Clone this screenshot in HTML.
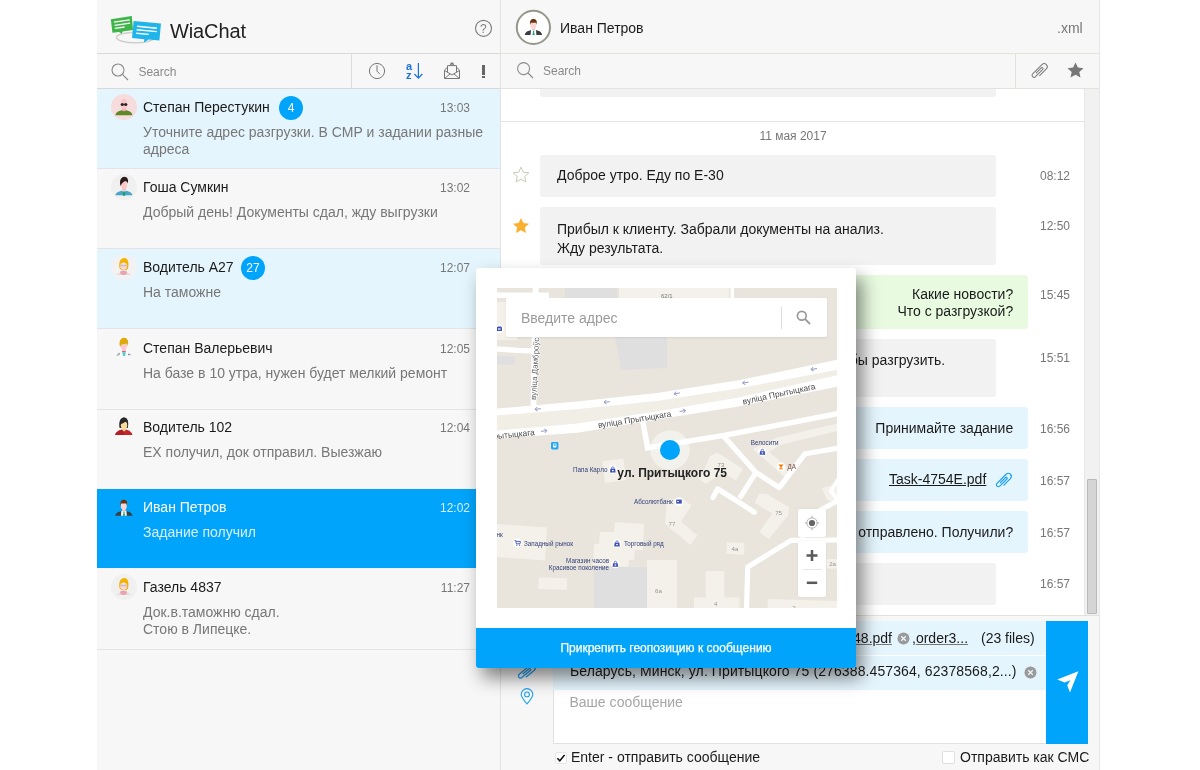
<!DOCTYPE html>
<html lang="ru">
<head>
<meta charset="utf-8">
<title>WiaChat</title>
<style>
*{box-sizing:border-box;margin:0;padding:0}
html,body{width:1200px;height:770px;overflow:hidden;background:#fff}
body{font-family:"Liberation Sans",sans-serif;font-size:14px;color:#222;position:relative;will-change:transform}
.abs{position:absolute}
#app{position:absolute;left:97px;top:0;width:1003px;height:770px;background:#f7f7f7;overflow:hidden}
/* all children of #app are positioned in page coords via #in */
#in{position:absolute;left:-97px;top:0;width:1200px;height:770px}
.hl{position:absolute;height:1px;background:#dcdcdc}
.vl{position:absolute;width:1px;background:#dcdcdc}
.t{position:absolute;white-space:nowrap;line-height:16px}
.g{color:#777}
.row{position:absolute;left:97px;width:403px}
.row .nm{position:absolute;left:46px;top:10px;font-size:14px;line-height:16px;color:#1a1a1a;white-space:nowrap}
.row .tm{position:absolute;right:30px;top:12.4px;font-size:12px;line-height:14px;color:#777;white-space:nowrap}
.row .ms{position:absolute;left:46px;top:35px;font-size:14px;line-height:17px;color:#777;white-space:nowrap}
.row .av{position:absolute;left:14px;top:5px;width:26px;height:26px}
.badge{position:absolute;top:6.8px;width:24px;height:24px;border-radius:12px;background:#00a4fa;color:#fff;font-size:12px;line-height:24px;text-align:center}
.bub{position:absolute;border-radius:3px}
.gr{background:#f2f2f2}
.bl{background:#e5f5fe}
.gn{background:#e8fbe0}
.mt{position:absolute;font-size:14px;line-height:17px;color:#1a1a1a;white-space:nowrap}
.tt{position:absolute;left:1040px;font-size:12px;line-height:14px;color:#777;white-space:nowrap}
</style>
</head>
<body>
<div id="app"><div id="in">

<!-- ============ LEFT PANEL ============ -->
<div class="hl" style="left:97px;top:53px;width:403px;background:#d9d9d9"></div>
<div class="hl" style="left:97px;top:88px;width:403px;background:#d9d9d9"></div>
<div class="vl" style="left:500px;top:0;height:770px;background:#e2e2e2"></div>
<div class="vl" style="left:351px;top:54px;height:34px;background:#dcdcdc"></div>

<!-- logo -->
<svg class="abs" style="left:108px;top:12px" width="58" height="34" viewBox="108 12 58 34">
  <ellipse cx="135.5" cy="37.5" rx="19" ry="5.3" fill="none" stroke="#cfcfcf" stroke-width="1.6"/>
  <path d="M110.8 19.2 L131.8 16 L133 30 L122.5 31.4 L121.8 33.8 L119 31.9 L112.4 32.8 Z" fill="#3fb54a"/>
  <path d="M114 22.2 L129.8 19.8 M114.6 25.4 L130 23.1 M114.8 28.4 L124.6 27" stroke="#fff" stroke-width="1.3" fill="none"/>
  <path d="M133.6 21 L161 23.6 L159.4 40.4 L148.6 39.6 L144 42.4 L144.2 39.2 L132 38 Z" fill="#1fb5ea"/>
  <path d="M137 26.2 L157 28.2 M136.6 29.8 L156.8 31.6 M136.2 33.2 L148.8 34.4" stroke="#fff" stroke-width="1.4" fill="none"/>
</svg>
<div class="t" style="left:170px;top:19px;font-size:20px;line-height:24px;color:#222;letter-spacing:-0.12px">WiaChat</div>

<!-- help -->
<svg class="abs" style="left:474px;top:19px" width="19" height="19" viewBox="0 0 19 19">
  <circle cx="9.5" cy="9.3" r="8" fill="none" stroke="#808080" stroke-width="1.15"/>
  <text x="9.4" y="13.6" font-family="Liberation Sans" font-size="12" fill="#808080" text-anchor="middle">?</text>
</svg>

<!-- left search -->
<svg class="abs" style="left:110.4px;top:61.8px" width="20" height="20" viewBox="0 0 20 20">
  <circle cx="8" cy="8" r="6" fill="none" stroke="#8a8a8a" stroke-width="1.1"/>
  <path d="M12.4 12.4 L18 18" stroke="#8a8a8a" stroke-width="1.1"/>
</svg>
<div class="t" style="left:138.4px;top:63.8px;font-size:12px;color:#8a8a8a">Search</div>

<!-- toolbar icons -->
<svg class="abs" style="left:368px;top:62px" width="18" height="18" viewBox="0 0 18 18">
  <circle cx="9" cy="9" r="7.6" fill="none" stroke="#777" stroke-width="1"/>
  <path d="M9 3.2 V9.2 L12 12.2" fill="none" stroke="#777" stroke-width="1"/>
</svg>
<svg class="abs" style="left:404px;top:61px" width="20" height="20" viewBox="404 61 20 20">
  <text x="406" y="69.6" font-family="Liberation Sans" font-weight="bold" font-size="11" fill="#1a73d8">a</text>
  <text x="406" y="78.6" font-family="Liberation Sans" font-weight="bold" font-size="11" fill="#1a73d8">z</text>
  <path d="M418.4 63 V78 M414.4 74 L418.4 78.2 L422.4 74" fill="none" stroke="#1a73d8" stroke-width="1.2"/>
</svg>
<svg class="abs" style="left:443px;top:61px" width="18" height="20" viewBox="443 61 18 20">
  <path d="M444.5 70 L444.5 78.5 L459.5 78.5 L459.5 70 L452 63.3 Z" fill="none" stroke="#777" stroke-width="1"/>
  <path d="M447.5 72.6 V65.6 H456.5 V72.6" fill="#f7f7f7" stroke="#777" stroke-width="1"/>
  <path d="M444.5 70.4 L452 75 L459.5 70.4 M444.8 78.3 L450.2 73.8 M459.2 78.3 L453.8 73.8" fill="none" stroke="#777" stroke-width="1"/>
  <rect x="450.5" y="62.6" width="3" height="2" fill="#777"/>
</svg>
<div class="abs" style="left:482px;top:65px;width:3px;height:9.5px;background:#666"></div>
<div class="abs" style="left:482px;top:76px;width:3px;height:2.4px;background:#666"></div>

<!-- row backgrounds & borders -->
<div class="abs" style="left:97px;top:89px;width:403px;height:79px;background:#e5f5fe"></div>
<div class="abs" style="left:97px;top:249px;width:403px;height:79px;background:#e5f5fe"></div>
<div class="abs" style="left:97px;top:489px;width:403px;height:79px;background:#00a4fa"></div>
<div class="hl" style="left:97px;top:568px;width:403px;background:#fbeee6"></div>
<div class="hl" style="left:97px;top:488px;width:403px;background:#fbeee2"></div>
<div class="hl" style="left:97px;top:168px;width:403px;background:#e4e4e4"></div>
<div class="hl" style="left:97px;top:248px;width:403px;background:#e4e4e4"></div>
<div class="hl" style="left:97px;top:328px;width:403px;background:#e4e4e4"></div>
<div class="hl" style="left:97px;top:409px;width:403px;background:#e4e4e4"></div>
<div class="hl" style="left:97px;top:649px;width:403px;background:#e4e4e4"></div>

<!-- row 1 -->
<div class="row" style="top:89px;height:79px">
  <svg class="av" viewBox="0 0 26 26"><circle cx="13" cy="13" r="13" fill="#f6dcdd"/>
    <path d="M4.4 21.2 C4.6 18.2 7.8 16.9 10.8 16.2 L15.2 16.2 C18.2 16.9 21.2 18.2 21.4 21.2 Z" fill="#5b8a26"/>
    <path d="M11 13 H15 V16.6 Q13 17.8 11 16.6 Z" fill="#efaeba"/>
    <path d="M9.9 8.6 C9.9 6 11.6 4.8 13 4.8 C14.4 4.8 16.1 6 16.1 8.6 V12 Q15.6 15 13 15.2 Q10.4 15 9.9 12 Z" fill="#fdc6c6"/>
    <circle cx="11.3" cy="10.5" r="1.55" fill="#262626"/><circle cx="14.7" cy="10.5" r="1.55" fill="#262626"/><rect x="9.7" y="9.9" width="6.6" height="0.9" fill="#262626"/>
  </svg>
  <div class="nm">Степан Перестукин</div>
  <div class="badge" style="left:182px">4</div>
  <div class="tm">13:03</div>
  <div class="ms">Уточните адрес разгрузки. В CMP и задании разные<br>адреса</div>
</div>
<!-- row 2 -->
<div class="row" style="top:169px;height:79px">
  <svg class="av" viewBox="0 0 26 26"><circle cx="13" cy="13" r="13" fill="#f0f0f0"/>
    <path d="M4.4 21.3 C4.6 18.6 7.8 17.4 10.8 16.7 L15.2 16.7 C18.2 17.4 21.2 18.6 21.4 21.3 Z" fill="#4ba5c7"/>
    <path d="M10.6 16.4 L13 18.2 L15.4 16.4 L14.8 15.4 H11.2 Z" fill="#eef4f6"/>
    <path d="M12 17.4 H14 L14.3 21.8 H11.7 Z" fill="#18a374"/>
    <rect x="11.3" y="13" width="3.4" height="3.6" fill="#f7b3bb"/>
    <path d="M9.9 8 H16.1 V12 Q15.6 15 13 15.2 Q10.4 15 9.9 12 Z" fill="#fdc9ca"/>
    <path d="M9.4 11.4 C8 5.6 10.8 2.8 13.3 2.8 C16.4 2.8 17.8 5.6 16.8 9.6 C16.2 7.4 14.8 6.8 13.4 7.6 C11.6 8.6 10.6 9.6 9.9 11.8 Z" fill="#2d1b1b"/>
  </svg>
  <div class="nm">Гоша Сумкин</div>
  <div class="tm">13:02</div>
  <div class="ms">Добрый день! Документы сдал, жду выгрузки</div>
</div>
<!-- row 3 -->
<div class="row" style="top:249px;height:79px">
  <svg class="av" viewBox="0 0 26 26"><circle cx="13" cy="13" r="13" fill="#f2f2f2"/>
    <path d="M5 20.9 L10 18 H16 L20.2 20.9 Z" fill="#e8dada"/>
    <path d="M8.6 14.6 C7 8 9.8 4 13.4 4 C17 4.2 18.2 8.4 17 14.4 L15.4 16 L10.4 16 Z" fill="#f0b400"/>
    <ellipse cx="12.6" cy="12.2" rx="3.3" ry="3.6" fill="#fad9e0"/>
    <path d="M9.2 17.4 Q12.6 15.4 15.8 17.4 Q16.4 20.9 12.6 20.9 Q8.8 20.9 9.2 17.4 Z" fill="#e8a3b0"/>
    <path d="M9.6 11.6 H15.6" stroke="#b7afcb" stroke-width="0.8"/><circle cx="11" cy="11.8" r="1.2" fill="none" stroke="#c5bfd6" stroke-width="0.5"/><circle cx="14.2" cy="11.8" r="1.2" fill="none" stroke="#c5bfd6" stroke-width="0.5"/>
  </svg>
  <div class="nm">Водитель А27</div>
  <div class="badge" style="left:144px">27</div>
  <div class="tm">12:07</div>
  <div class="ms">На таможне</div>
</div>
<!-- row 4 -->
<div class="row" style="top:330px;height:79px">
  <svg class="av" viewBox="0 0 26 26">
    <path d="M4.2 21.3 C4.4 18.4 7.8 17.2 10.8 16.5 L15.2 16.5 C18.2 17.2 21.4 18.4 21.6 21.3 Z" fill="#fbfbfb"/>
    <path d="M5 20.8 L7.4 18 L9.4 17.4 L8.8 19.4 L7.4 20.8 Z" fill="#a9b3b8"/>
    <path d="M17.6 17.6 L18.6 20.6 M19.4 18.4 L20.2 21" stroke="#b9c3c8" stroke-width="0.6"/>
    <rect x="17.3" y="19" width="1.3" height="1.1" fill="#4a4f9a"/>
    <path d="M11.2 17.2 H14.6 L14.2 21 H12 Z" fill="#4fcfd3"/>
    <rect x="11.3" y="12.6" width="3.4" height="4" fill="#fcc5cc"/>
    <rect x="11" y="15.9" width="3.8" height="1.3" fill="#c8717c"/>
    <path d="M9.4 8 H15.9 V11.6 Q15.4 14.6 12.7 14.8 Q10 14.6 9.4 11.6 Z" fill="#fdc9d0"/>
    <path d="M9 11.8 C7.4 6 10.2 2.8 13 2.8 C16.4 2.8 18 5.8 16.8 11.4 C16.6 9.6 16 8.4 15 8.6 C13.4 9.4 11.2 9 10.2 10 Z" fill="#ddaa08"/>
  </svg>
  <div class="nm" style="top:10px">Степан Валерьевич</div>
  <div class="tm">12:05</div>
  <div class="ms" style="top:35px">На базе в 10 утра, нужен будет мелкий ремонт</div>
</div>
<!-- row 5 -->
<div class="row" style="top:409px;height:79px">
  <svg class="av" viewBox="0 0 26 26">
    <path d="M8.6 14 C7.2 7.4 9.8 3.4 12.8 3.4 C16.4 3.4 18 7 16.8 14 Z" fill="#2a2729"/>
    <path d="M4.2 21.1 C4.6 18 8 16.6 11 15.6 L13 17.4 L15 15.6 C18 16.6 21.2 18 21.4 21.1 Z" fill="#c3262a"/>
    <path d="M4.2 21.1 C4.6 18 8 16.6 11 15.6 L13 17.4 V21.1 Z" fill="#b01f24"/>
    <path d="M11 13.4 H15 V15.8 L13 17.6 L11 15.8 Z" fill="#efd089"/>
    <ellipse cx="13" cy="11.2" rx="3.2" ry="4" fill="#f9dc9a"/>
    <path d="M9.2 10.4 C8.8 6.4 10.8 4 13 3.6 C15.6 3.8 16.8 5.8 16.6 7.6 C14.8 7 13 9 9.2 10.4 Z" fill="#2a2729"/>
  </svg>
  <div class="nm">Водитель 102</div>
  <div class="tm">12:04</div>
  <div class="ms">ЕХ получил, док отправил. Выезжаю</div>
</div>
<!-- row 6 -->
<div class="row" style="top:489px;height:80px">
  <svg class="av" viewBox="0 0 26 26">
    <path d="M4.2 21.8 C4.4 18.8 7.8 17.6 10.8 16.9 L15.2 16.9 C18.2 17.6 21.2 18.8 21.4 21.8 Z" fill="#3b3f42"/>
    <path d="M10.4 16.7 H15.4 L15.8 21.8 H10 Z" fill="#fff"/>
    <path d="M12.2 17.6 H13.8 L13.5 19 L14.2 21.8 H11.8 L12.5 19 Z" fill="#12a67c"/>
    <rect x="11.3" y="13.4" width="3.2" height="3.6" fill="#f4c0c2"/>
    <path d="M9.9 9 H15.7 V13.2 Q15.2 15.8 12.8 16 Q10.4 15.8 9.9 13.2 Z" fill="#fad6d4"/>
    <path d="M9.7 11.8 C8.6 7.4 10.6 5.7 12.8 5.7 C15.2 5.7 17 7.2 15.9 11.6 L15.5 9.6 H10.2 Z" fill="#6b3410"/>
  </svg>
  <div class="nm" style="color:#fff">Иван Петров</div>
  <div class="tm" style="color:#d6efff">12:02</div>
  <div class="ms" style="color:#d9f0ff">Задание получил</div>
</div>
<!-- row 7 -->
<div class="row" style="top:569px;height:80px">
  <svg class="av" viewBox="0 0 26 26"><circle cx="13" cy="13" r="13" fill="#f0f0f0"/>
    <path d="M5 20.9 L10 18 H16 L20.2 20.9 Z" fill="#e8dada"/>
    <path d="M8.6 14.6 C7 8 9.8 4 13.4 4 C17 4.2 18.2 8.4 17 14.4 L15.4 16 L10.4 16 Z" fill="#f0b400"/>
    <ellipse cx="12.6" cy="12.2" rx="3.3" ry="3.6" fill="#fad9e0"/>
    <path d="M9.2 17.4 Q12.6 15.4 15.8 17.4 Q16.4 20.9 12.6 20.9 Q8.8 20.9 9.2 17.4 Z" fill="#e8a3b0"/>
    <path d="M9.6 11.6 H15.6" stroke="#b7afcb" stroke-width="0.8"/><circle cx="11" cy="11.8" r="1.2" fill="none" stroke="#c5bfd6" stroke-width="0.5"/><circle cx="14.2" cy="11.8" r="1.2" fill="none" stroke="#c5bfd6" stroke-width="0.5"/>
  </svg>
  <div class="nm">Газель 4837</div>
  <div class="tm">11:27</div>
  <div class="ms">Док.в.таможню сдал.<br>Стою в Липецке.</div>
</div>


<!-- ============ RIGHT PANEL ============ -->
<div class="hl" style="left:501px;top:53px;width:599px;background:#e3e3da"></div>
<div class="hl" style="left:501px;top:88px;width:599px;background:#e3e3da"></div>
<div class="vl" style="left:1015px;top:54px;height:34px;background:#e3e3da"></div>
<div class="vl" style="left:1099px;top:0;height:770px;background:#e6e6e6"></div>

<!-- header avatar -->
<svg class="abs" style="left:515px;top:9px" width="37" height="37" viewBox="0 0 37 37">
  <circle cx="18.4" cy="18.4" r="16.6" fill="#fff" stroke="#96968a" stroke-width="2"/>
  <g transform="translate(5.6,4.2)">
    <path d="M4.2 21.8 C4.4 18.8 7.8 17.6 10.8 16.9 L15.2 16.9 C18.2 17.6 21.2 18.8 21.4 21.8 Z" fill="#3b3f42"/>
    <path d="M10.4 16.7 H15.4 L15.8 21.8 H10 Z" fill="#fff"/>
    <path d="M12.2 17.6 H13.8 L13.5 19 L14.2 21.8 H11.8 L12.5 19 Z" fill="#12a67c"/>
    <rect x="11.3" y="13.4" width="3.2" height="3.6" fill="#f4c0c2"/>
    <path d="M9.9 9 H15.7 V13.2 Q15.2 15.8 12.8 16 Q10.4 15.8 9.9 13.2 Z" fill="#fad6d4"/>
    <path d="M9.7 11.8 C8.6 7.4 10.6 5.7 12.8 5.7 C15.2 5.7 17 7.2 15.9 11.6 L15.5 9.6 H10.2 Z" fill="#6b3410"/>
  </g>
</svg>
<div class="t" style="left:560px;top:20px;font-size:14px;color:#1a1a1a">Иван Петров</div>
<div class="t" style="left:1057px;top:20px;font-size:14px;color:#777">.xml</div>

<!-- right search -->
<svg class="abs" style="left:516px;top:61px" width="20" height="20" viewBox="0 0 20 20">
  <circle cx="7.6" cy="7.6" r="6" fill="none" stroke="#8a8a8a" stroke-width="1.1"/>
  <path d="M12 12 L17 17" stroke="#8a8a8a" stroke-width="1.1"/>
</svg>
<div class="t" style="left:543px;top:62.5px;font-size:12px;color:#8a8a8a">Search</div>
<!-- paperclip (gray) -->
<svg class="abs" style="left:1028px;top:58px" width="24" height="24" viewBox="1028 58 24 24">
  <path d="M3.25 -6 L3.25 -16 A3.25 3.25 0 0 0 -3.25 -16 L-3.25 -2.1 A2.1 2.1 0 0 0 0.95 -2.1 L0.95 -13 A1.1 1.1 0 0 0 -1.25 -13 L-1.25 -5.5" transform="translate(1039.9 71) rotate(45) scale(0.95) translate(0 9.65)" fill="none" stroke="#777" stroke-width="1" stroke-linecap="round"/>
</svg>
<!-- star filled -->
<svg class="abs" style="left:1067px;top:62px" width="17" height="16" viewBox="0 0 17 16">
  <path d="M8.5 0.4 L10.9 5.6 L16.5 6.2 L12.3 10 L13.5 15.6 L8.5 12.7 L3.5 15.6 L4.7 10 L0.5 6.2 L6.1 5.6 Z" fill="#777"/>
</svg>

<!-- chat area -->
<div class="abs" style="left:501px;top:89px;width:584px;height:526px;background:#fff"></div>
<div class="abs" style="left:1084px;top:89px;width:15px;height:526px;background:#f1f1f1;border-left:1px solid #e6e6e6"></div>
<div class="abs" style="left:1087px;top:479px;width:10px;height:135px;background:#d5d5d5;border:1px solid #b9b9b9;border-radius:1px"></div>
<div class="hl" style="left:501px;top:615px;width:599px;background:#e3e3da"></div>

<div class="bub gr" style="left:540px;top:89px;width:456px;height:7.5px;border-radius:0 0 3px 3px"></div>
<div class="hl" style="left:501px;top:121px;width:584px;background:#e6e6de"></div>
<div class="t g" style="left:693px;top:128px;width:200px;text-align:center;font-size:12px;line-height:14px;margin-top:0.8px">11 мая 2017</div>

<!-- m1 -->
<svg class="abs" style="left:512px;top:166px" width="18" height="17" viewBox="0 0 18 17">
  <path d="M9 1.2 L11.3 6.2 L16.8 6.8 L12.7 10.5 L13.9 15.9 L9 13.1 L4.1 15.9 L5.3 10.5 L1.2 6.8 L6.7 6.2 Z" fill="none" stroke="#c9c9b8" stroke-width="1" stroke-linejoin="round"/>
</svg>
<div class="bub gr" style="left:540px;top:155px;width:456px;height:41.5px"></div>
<div class="mt" style="left:557px;top:167px">Доброе утро. Еду по Е-30</div>
<div class="tt" style="top:168.5px">08:12</div>

<!-- m2 -->
<svg class="abs" style="left:512px;top:217px" width="18" height="17" viewBox="0 0 18 17">
  <path d="M9 1 L11.4 6.1 L17 6.8 L12.8 10.5 L14 16 L9 13.2 L4 16 L5.2 10.5 L1 6.8 L6.6 6.1 Z" fill="#fbb030"/>
</svg>
<div class="bub gr" style="left:540px;top:207px;width:456px;height:57.5px"></div>
<div class="mt" style="left:557px;top:219.5px;line-height:19px">Прибыл к клиенту. Забрали документы на анализ.<br>Жду результата.</div>
<div class="tt" style="top:218.5px">12:50</div>

<!-- m3 -->
<div class="bub gn" style="left:700px;top:275px;width:328px;height:54px"></div>
<div class="mt" style="right:186.8px;top:286px;text-align:right">Какие новости?<br>Что с разгрузкой?</div>
<div class="tt" style="top:288px">15:45</div>

<!-- m4 -->
<div class="bub gr" style="left:540px;top:339px;width:456px;height:57.5px"></div>
<div class="mt" style="right:254.8px;top:352px;text-align:right">Приехал на склад. Ждем, когда нас смогут принять, чтобы разгрузить.</div>
<div class="tt" style="top:350.5px">15:51</div>

<!-- m5 -->
<div class="bub bl" style="left:700px;top:407px;width:328px;height:42px"></div>
<div class="mt" style="right:186.8px;top:419.5px">Принимайте задание</div>
<div class="tt" style="top:421.5px">16:56</div>

<!-- m6 -->
<div class="bub bl" style="left:700px;top:459px;width:328px;height:41.5px"></div>
<div class="mt" style="left:889px;top:471px;text-decoration:underline">Task-4754E.pdf</div>
<svg class="abs" style="left:992px;top:468px" width="24" height="24" viewBox="992 468 24 24">
  <path d="M3.25 -6 L3.25 -16 A3.25 3.25 0 0 0 -3.25 -16 L-3.25 -2.1 A2.1 2.1 0 0 0 0.95 -2.1 L0.95 -13 A1.1 1.1 0 0 0 -1.25 -13 L-1.25 -5.5" transform="translate(1004.1 480.6) rotate(45) scale(0.93) translate(0 9.65)" fill="none" stroke="#1da1f2" stroke-width="1.3" stroke-linecap="round"/>
</svg>
<div class="tt" style="top:473.5px">16:57</div>

<!-- m7 -->
<div class="bub bl" style="left:700px;top:511px;width:328px;height:41.5px"></div>
<div class="mt" style="right:186.8px;top:523.5px">Задание отправлено. Получили?</div>
<div class="tt" style="top:525.5px">16:57</div>

<!-- m8 -->
<div class="bub gr" style="left:540px;top:563px;width:456px;height:41.5px"></div>
<div class="tt" style="top:576.5px">16:57</div>

<!-- compose -->
<div class="abs" style="left:553px;top:621px;width:494px;height:123px;background:#fff;border:1px solid #e2e2e2"></div>
<div class="abs" style="left:553px;top:621px;width:493px;height:34px;background:#e5f5fe"></div>
<div class="abs" style="left:553px;top:656px;width:493px;height:33.5px;background:#e5f5fe"></div>
<div class="abs" style="left:1046px;top:621px;width:42px;height:123px;background:#00a4fa"></div>
<svg class="abs" style="left:1056px;top:670px" width="24" height="24" viewBox="0 0 24 24">
  <path d="M1.2 9.4 L22.4 1.2 L14 22.6 L11.2 15.2 L14.4 10.2 L8.6 12.6 Z" fill="#fff"/>
</svg>

<div class="mt" style="right:308px;top:630px"><span style="text-decoration:underline;text-decoration-color:#777">order2348.pdf</span></div>
<div class="mt" style="left:912px;top:630px">,<span style="text-decoration:underline;text-decoration-color:#777">order3...</span></div>
<div class="mt" style="left:981px;top:630px">(23 files)</div>
<svg class="abs" style="left:896.5px;top:632px" width="13" height="13" viewBox="0 0 13 13">
  <circle cx="6.5" cy="6.5" r="6" fill="#9a9a9a"/><path d="M4.2 4.2 L8.8 8.8 M8.8 4.2 L4.2 8.8" stroke="#eaf6fd" stroke-width="1.3"/>
</svg>
<div class="mt" style="left:570px;top:662.5px;letter-spacing:0.1px">Беларусь, Минск, ул. Притыцкого 75 (276388.457364, 62378568,2...)</div>
<svg class="abs" style="left:1023.5px;top:665.5px" width="13" height="13" viewBox="0 0 13 13">
  <circle cx="6.5" cy="6.5" r="6" fill="#9a9a9a"/><path d="M4.2 4.2 L8.8 8.8 M8.8 4.2 L4.2 8.8" stroke="#eaf6fd" stroke-width="1.3"/>
</svg>
<div class="mt" style="left:569.5px;top:694px;color:#a6a6a6">Ваше сообщение</div>

<!-- compose left icons -->
<svg class="abs" style="left:512px;top:656px" width="30" height="26" viewBox="512 656 30 26">
  <path d="M3.25 -6 L3.25 -16 A3.25 3.25 0 0 0 -3.25 -16 L-3.25 -2.1 A2.1 2.1 0 0 0 0.95 -2.1 L0.95 -13 A1.1 1.1 0 0 0 -1.25 -13 L-1.25 -5.5" transform="translate(519.7 678.2) rotate(50)" fill="none" stroke="#1da1f2" stroke-width="1.3" stroke-linecap="round"/>
</svg>
<svg class="abs" style="left:519px;top:687px" width="16" height="19" viewBox="0 0 16 19">
  <path d="M8 16.9 C4 12.2 2.2 10 2.2 7.4 A5.8 5.8 0 0 1 13.8 7.4 C13.8 10 12 12.2 8 16.9 Z" fill="none" stroke="#1da1f2" stroke-width="1.1"/>
  <circle cx="8" cy="7.4" r="2.4" fill="none" stroke="#1da1f2" stroke-width="1.1"/>
</svg>

<!-- checkboxes -->
<div class="abs" style="left:555px;top:752px;width:12px;height:12px;background:#fff;border:1px solid #e6e6e6;border-radius:2px"></div>
<svg class="abs" style="left:555px;top:752px" width="12" height="12" viewBox="0 0 12 12"><path d="M2.4 6.2 L4.8 8.8 L9.6 3" fill="none" stroke="#111" stroke-width="1.5"/></svg>
<div class="mt" style="left:571px;top:749px">Enter - отправить сообщение</div>
<div class="abs" style="left:942px;top:751px;width:13px;height:13px;background:#fff;border:1px solid #e0e0e0;border-radius:2px"></div>
<div class="mt" style="left:960px;top:749px">Отправить как СМС</div>


</div></div>

<!-- ============ MAP POPUP ============ -->
<div class="abs" style="left:476px;top:268px;width:380px;height:400px;background:#fff;border-radius:3px;box-shadow:6px 10px 18px rgba(0,0,0,.48)"></div>
<div class="abs" style="left:476px;top:628px;width:380px;height:40px;background:#00a4fa;border-radius:0 0 3px 3px"></div>
<div class="t" style="left:476px;top:640.8px;width:380px;text-align:center;font-size:12px;line-height:14px;color:#fff;-webkit-text-stroke:0.25px #fff">Прикрепить геопозицию к сообщению</div>

<svg class="abs" style="left:497px;top:288px" width="340" height="320" viewBox="0 0 340 320" font-family="Liberation Sans">
  <rect width="340" height="320" fill="#e9e5dc"/>
  <!-- gray areas -->
  <path d="M118 49 H170 V80 L124 82 Z" fill="#dfdfdf"/>
  <rect x="68" y="0" width="52" height="10" fill="#dfdfdf"/>
  <rect x="0" y="68.5" width="18" height="8" fill="#dfdfdf"/>
  <path d="M97 279 H150 V320 H97 Z" fill="#dfdfdf"/>
  <!-- buildings -->
  <g fill="#f3f1e9">
    <rect x="122" y="0" width="110" height="10"/>
    <rect x="0" y="14" width="20" height="38"/>
    <path d="M105.5 173 L126.5 170.5 L129 192 L108 195 Z"/>
    <path d="M0 236 L50 239.5 L48 272.5 L0 269 Z"/>
    <path d="M118 234 L147 236 L146 262 L138 262 L137 272 L132 272 L131 279 L96 277 L97 256 L102 256 L103 244 L117 244 Z"/>
    <rect x="41.5" y="290" width="28.5" height="11.5" transform="rotate(1.5 56 296)"/>
    <path d="M150 272 H180 V320 H150 Z"/>
    <path d="M220.3 164.6 L246 181 L239 192.6 L226 184.4 L208.6 196 L201.6 190.3 L207 182 L213 168 Z"/>
    <path d="M262.4 205.5 L270 206 L291.6 219 L291.6 227 L271.7 251 L262.4 244 L275.2 225.4 L257.7 214.8 Z"/>
    <path d="M170 212 L184 210 L194.6 217.2 L184 233.5 L200.4 247.6 L193.4 257 L168 236 Z"/>
    <rect x="229.6" y="254.6" width="17.6" height="11.7" transform="rotate(3 238 260)"/>
    <path d="M208.6 283 H227.3 V309.5 H242.5 V320 H197 V309.5 H208.6 Z"/>
    <path d="M270.6 311 L340 313 V320 H270.6 Z"/>
    <rect x="330" y="271" width="10" height="9.5"/>
    <path d="M256 161 L279 150 L340 135.5 V143 L283 157 L272 164 L296 184.5 L290 191 Z"/>
    <path d="M325 200 L340 196 V214 L330 212 Z"/>
  </g>
  <!-- main avenue -->
  <path d="M0 127.6 L80 121.2 L160 113.1 L240 100.8 L340 82 V87.3 L240 109.7 L160 123.3 L80 135.4 L0 142.4 Z" fill="#f1eee6"/>
  <path d="M0 120.6 L80 113.6 L160 105 L240 92.6 L340 71.7 V82 L240 100.8 L160 113.1 L80 121.2 L0 127.6 Z" fill="#fff"/>
  <path d="M0 142.4 L80 135.4 L160 123.3 L240 109.7 L340 87.3 V98.8 L240 118.7 L160 131.6 L80 144.7 L0 150.6 Z" fill="#fff"/>
  <!-- roads -->
  <g fill="none" stroke="#fff" stroke-linejoin="round" stroke-linecap="butt">
    <path d="M0 7.2 H52" stroke-width="5.5"/>
    <path d="M0 61 L20 62.4 L36 63" stroke-width="5.4"/>
    <path d="M38.6 0 L36.4 120" stroke-width="5.8"/>
    <path d="M235.3 0 V10" stroke-width="3.5"/>
    
    <path d="M145.6 132 L150.6 159.8 L173 156.2 L227 147.4 L342 125.4" stroke-width="5.4" stroke-linejoin="miter"/>
    <path d="M226 147.6 L258.9 184.4 L282.3 199.6 L308 165.7 L342 160" stroke-width="5.2"/>
    <path d="M258.9 184.4 L242.5 210.4" stroke-width="5.2"/>
    <path d="M216 209.6 L220.6 200.8 L257.4 224.2" stroke-width="5.2" stroke-linecap="round"/>
    <path d="M249.5 322 L250.7 279 L294 252.4 L342 252" stroke-width="5.2"/>
    <path d="M342 212 L320 224 L307 246 L305 253" stroke-width="5"/>
    <path d="M342 190 L334 203 L342 214" stroke-width="4"/>
  </g>
  <!-- road arrows -->
  <g fill="none" stroke="#8d96c6" stroke-width="0.9">
    <path d="M3 0 H-3 M-0.6 -2 L-3 0 L-0.6 2" transform="translate(41 121) rotate(-6)"/>
    <path d="M3 0 H-3 M-0.6 -2 L-3 0 L-0.6 2" transform="translate(110 114) rotate(-6)"/>
    <path d="M3 0 H-3 M-0.6 -2 L-3 0 L-0.6 2" transform="translate(180 105.4) rotate(-9)"/>
    <path d="M3 0 H-3 M-0.6 -2 L-3 0 L-0.6 2" transform="translate(248.6 94.6) rotate(-10)"/>
    <path d="M3 0 H-3 M-0.6 -2 L-3 0 L-0.6 2" transform="translate(317 81) rotate(-10)"/>
    <path d="M-3 0 H3 M0.6 -2 L3 0 L0.6 2" transform="translate(47 143) rotate(-7)"/>
    <path d="M-3 0 H3 M0.6 -2 L3 0 L0.6 2" transform="translate(185.6 123) rotate(-9)"/>
  </g>
  <!-- street labels -->
  <g fill="#4a4a4a" font-size="8.4">
    <text x="-9.4" y="150.8" transform="rotate(-5.5 0 150)">Прытыцкага</text>
    <text x="101.4" y="140" transform="rotate(-9 101.4 140)">вуліца Прытыцкага</text>
    <text x="246.3" y="116.4" transform="rotate(-12 246.3 116.4)">вуліца Прытыцкага</text>
    <text x="39" y="112" transform="rotate(-87 39 112)" font-size="8" fill="#666" stroke="#fff" stroke-width="1.4" paint-order="stroke" stroke-linejoin="round">вуліца Дамброўская</text>
  </g>
  <text x="164" y="10" font-size="6" fill="#777">62/1</text>
  <!-- building numbers -->
  <g fill="#949494" font-size="6.1" text-anchor="middle">
    <text x="224" y="178.6">73</text>
    <text x="281.6" y="227">75</text>
    <text x="175" y="237.6">77</text>
    <text x="238" y="263">4а</text>
    <text x="218.6" y="318">4</text>
    <text x="161.4" y="304.6">6а</text>
    <text x="335.6" y="278.4">2а</text>
    <text x="297" y="321.6">2</text>
  </g>
  <!-- POI icons -->
  <g>
    <circle cx="2.4" cy="41" r="4.4" fill="#fff"/><path d="M-0.4 39.6 L1 38.6 H4 L5 39.6 V43 H-0.4 Z" fill="#3f51b5"/><rect x="1" y="40.4" width="2.6" height="1.2" fill="#fff"/>
    <rect x="54" y="154" width="7.4" height="7.4" rx="1.4" fill="#1fa6f5"/><rect x="56" y="155.4" width="3.4" height="4.2" rx="0.8" fill="#fff"/><rect x="56.7" y="156.2" width="2" height="1.5" fill="#1fa6f5"/>
    <g id="bag1"><circle cx="115.8" cy="181.6" r="4.3" fill="#fff"/><path d="M113.4 180.8 H118.2 L118.6 184.4 H113 Z" fill="#3f51b5"/><path d="M114.6 181 V180 a1.2 1.2 0 0 1 2.4 0 V181" fill="none" stroke="#3f51b5" stroke-width="0.7"/><rect x="115" y="182" width="1.6" height="1.2" fill="#fff"/></g>
    <use href="#bag1" x="4.2" y="74"/>
    <use href="#bag1" x="2.6" y="94.4"/>
    <use href="#bag1" x="149.6" y="-17.6"/>
    <circle cx="20.4" cy="255" r="4.4" fill="#fff"/><path d="M17.6 252.6 H18.8 L19.4 255.8 H23 L23.4 253.4 H19" fill="none" stroke="#3f51b5" stroke-width="0.9"/><circle cx="19.8" cy="257.2" r="0.6" fill="#3f51b5"/><circle cx="22.6" cy="257.2" r="0.6" fill="#3f51b5"/>
    <circle cx="182" cy="213.6" r="4.4" fill="#fff"/><rect x="179.2" y="211.6" width="5.6" height="4" fill="#3f51b5"/><rect x="180" y="213" width="2" height="0.8" fill="#fff"/>
    <circle cx="284" cy="178.6" r="4.3" fill="#fff"/><path d="M281.4 176.4 H286.6 L284.6 179 V180.4 H286 V181.2 H282 V180.4 H283.4 V179 Z" fill="#f57c00"/>
  </g>
  <!-- POI labels -->
  <g fill="#313e78" font-size="6.3">
    <text x="76" y="184.2">Папа Карло</text>
    <text x="137" y="215.8">Абсолютбанк</text>
    <text x="27" y="257.6">Западный рынок</text>
    <text x="-0.4" y="249">нк</text>
    <text x="127" y="258.4">Торговый ряд</text>
    <text x="112" y="275" text-anchor="end">Магазин часов</text>
    <text x="112" y="281.9" text-anchor="end">Красивое поколение</text>
    <text x="253.8" y="157.2">Велосити</text>
    <text x="290.4" y="181.2" fill="#7a4a40">ДА</text>
  </g>
  <!-- marker -->
  <circle cx="173" cy="162" r="19.8" fill="#fff" fill-opacity="0.45"/>
  <circle cx="173" cy="162" r="10" fill="#00a4fa"/>
  <text x="175.2" y="188.6" font-size="12" font-weight="bold" fill="#222" text-anchor="middle">ул. Притыцкого 75</text>
</svg>

<!-- map search box -->
<div class="abs" style="left:506px;top:298px;width:321px;height:39px;background:#fff;border-radius:2px;box-shadow:0 1px 2px rgba(0,0,0,.08)"></div>
<div class="t" style="left:521px;top:310px;font-size:14px;color:#9b9b9b">Введите адрес</div>
<div class="vl" style="left:781px;top:306.5px;height:22.5px;background:#dcdcdc"></div>
<svg class="abs" style="left:795px;top:309px" width="18" height="18" viewBox="0 0 18 18">
  <circle cx="6.8" cy="6.8" r="4.4" fill="none" stroke="#9a9a9a" stroke-width="1.7"/>
  <path d="M10.2 10.2 L15 15" stroke="#9a9a9a" stroke-width="1.9"/>
</svg>

<!-- map controls -->
<div class="abs" style="left:798px;top:509px;width:28px;height:28px;background:#fff;border-radius:2px;box-shadow:0 0 2px rgba(0,0,0,.08)"></div>
<svg class="abs" style="left:804px;top:515px" width="16" height="16" viewBox="0 0 16 16">
  <circle cx="8" cy="8" r="5.2" fill="none" stroke="#b0b0b0" stroke-width="0.9"/>
  <circle cx="8" cy="8" r="3.1" fill="#666"/>
  <path d="M8 0.6 V3.4 M8 12.6 V15.4 M0.6 8 H3.4 M12.6 8 H15.4" stroke="#b0b0b0" stroke-width="0.9"/>
</svg>
<div class="abs" style="left:798px;top:541px;width:28px;height:56px;background:#fff;border-radius:2px;box-shadow:0 0 2px rgba(0,0,0,.08)"></div>
<div class="hl" style="left:802.5px;top:569px;width:19px;background:#e6e6e6"></div>
<svg class="abs" style="left:806px;top:549px" width="12" height="40" viewBox="0 0 12 40">
  <path d="M6 1 V12 M0.5 6.5 H11.5" stroke="#5a5a5a" stroke-width="2.5"/>
  <path d="M0.8 33.8 H11.2" stroke="#5a5a5a" stroke-width="2.5"/>
</svg>


</body>
</html>
